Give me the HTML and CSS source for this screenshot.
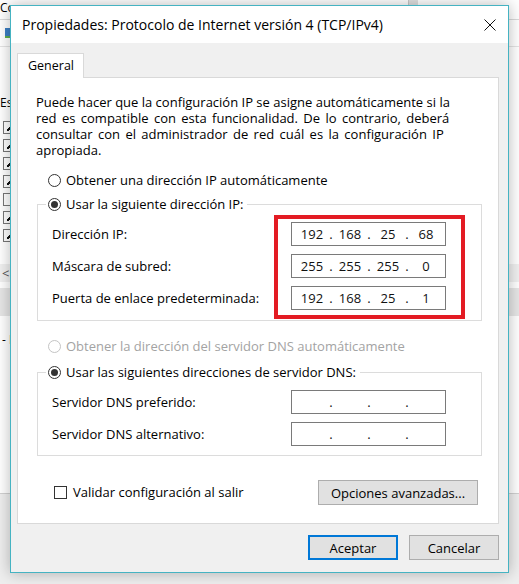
FILE: index.html
```html
<!DOCTYPE html>
<html lang="es">
<head>
<meta charset="utf-8">
<title>Propiedades: Protocolo de Internet versión 4 (TCP/IPv4)</title>
<link rel="stylesheet" href="styles.css">
</head>
<body>
<div class="desktop">
  <div class="bgwin">
    <div class="bg-title">Co</div>
    <div class="bg-toolbar"><span class="bg-icon"></span></div>
    <div class="bg-label">Est</div>
    <ul class="bg-list">
      <li class="on"></li>
      <li class="on"></li>
      <li class="on"></li>
      <li class="on"></li>
      <li></li>
      <li class="on"></li>
      <li class="on"></li>
    </ul>
    <div class="bg-scroll">&lt;</div>
    <div class="bg-band"></div>
    <div class="bg-desc">- D</div>
  </div>
  <div class="bg-edge"></div>

  <section class="dialog">
    <header class="titlebar">
      <span class="title">Propiedades: Protocolo de Internet versión 4 (TCP/IPv4)</span>
      <span class="close">
        <svg width="12" height="12" viewBox="0 0 12 12"><path d="M0.5 0.5 L11.5 11.5 M11.5 0.5 L0.5 11.5" stroke="#111" stroke-width="1" fill="none"/></svg>
      </span>
    </header>
    <div class="dlg-body">
      <div class="tabs"><div class="tab">General</div></div>
      <div class="panel">
        <p class="intro"><span class="line">Puede hacer que la configuración IP se asigne automáticamente si la</span><span class="line wide">red es compatible con esta funcionalidad. De lo contrario, deberá</span><span class="line wide">consultar con el administrador de red cuál es la configuración IP</span><span class="line">apropiada.</span></p>

        <div class="radio-row"><span class="radio"></span><span>Obtener una dirección IP automáticamente</span></div>

        <div class="group group-ip">
          <div class="legend"><span class="radio checked"></span><span>Usar la siguiente dirección IP:</span></div>
          <div class="fields">
            <div class="field"><span class="flabel">Dirección IP:</span>
              <div class="ip"><span class="oct">192</span><span class="dot">.</span><span class="oct">168</span><span class="dot">.</span><span class="oct">25</span><span class="dot">.</span><span class="oct">68</span></div>
            </div>
            <div class="field"><span class="flabel">Máscara de subred:</span>
              <div class="ip"><span class="oct">255</span><span class="dot">.</span><span class="oct">255</span><span class="dot">.</span><span class="oct">255</span><span class="dot">.</span><span class="oct">0</span></div>
            </div>
            <div class="field"><span class="flabel">Puerta de enlace predeterminada:</span>
              <div class="ip"><span class="oct">192</span><span class="dot">.</span><span class="oct">168</span><span class="dot">.</span><span class="oct">25</span><span class="dot">.</span><span class="oct">1</span></div>
            </div>
          </div>
          <div class="highlight"></div>
        </div>

        <div class="radio-row disabled"><span class="radio"></span><span>Obtener la dirección del servidor DNS automáticamente</span></div>

        <div class="group group-dns">
          <div class="legend"><span class="radio checked"></span><span>Usar las siguientes direcciones de servidor DNS:</span></div>
          <div class="fields">
            <div class="field"><span class="flabel">Servidor DNS preferido:</span>
              <div class="ip"><span class="oct"></span><span class="dot">.</span><span class="oct"></span><span class="dot">.</span><span class="oct"></span><span class="dot">.</span><span class="oct"></span></div>
            </div>
            <div class="field"><span class="flabel">Servidor DNS alternativo:</span>
              <div class="ip"><span class="oct"></span><span class="dot">.</span><span class="oct"></span><span class="dot">.</span><span class="oct"></span><span class="dot">.</span><span class="oct"></span></div>
            </div>
          </div>
        </div>

        <div class="bottom-row">
          <div class="check-row"><span class="checkbox"></span><span>Validar configuración al salir</span></div>
          <div class="btn btn-adv">Opciones avanzadas...</div>
        </div>
      </div>
      <div class="actions">
        <div class="btn btn-default">Aceptar</div>
        <div class="btn">Cancelar</div>
      </div>
    </div>
  </section>
</div>
</body>
</html>
```

FILE: styles.css
```css
* { box-sizing: border-box; }
html, body { margin: 0; padding: 0; }
body {
  width: 519px;
  height: 584px;
  overflow: hidden;
  background: #efefef;
  font-family: "Open Sans", "Noto Sans", sans-serif;
  font-size: 13px;
  color: #000;
}
.desktop {
  position: relative;
  width: 519px;
  height: 584px;
  background: #eeeeee;
}

/* background window peeking out on the left */
.bgwin {
  position: absolute;
  left: 0;
  top: 0;
  width: 519px;
  height: 494px;
  background: #fff;
  border-bottom: 1px solid #d0d0d0;
  display: flex;
  flex-direction: column;
}
.bg-title {
  height: 20px;
  padding-top: 1px;
  font-size: 12px;
  line-height: 14px;
  border-bottom: 1px solid #dadada;
}
.bg-toolbar {
  height: 27px;
  padding-top: 8px;
  padding-left: 5px;
  border-bottom: 1px solid #e4e4e4;
}
.bg-icon {
  display: block;
  width: 8px;
  height: 10px;
  background: #3c7fc4;
  border-bottom: 2px solid #5fae4c;
}
.bg-label {
  margin-top: 48px;
  font-size: 12px;
  line-height: 16px;
}
.bg-list {
  list-style: none;
  margin: 10px 0 0 3px;
  padding: 0;
  display: flex;
  flex-direction: column;
  gap: 5px;
}
.bg-list li {
  width: 13px;
  height: 13px;
  border: 1px solid #777;
  background: #fff;
}
.bg-list li.on {
  background: linear-gradient(135deg, transparent 40%, #111 40%, #111 60%, transparent 60%) no-repeat 3px 3px / 6px 6px, #fff;
}
.bg-scroll {
  margin-top: 22px;
  height: 18px;
  padding-left: 2px;
  font-size: 13px;
  line-height: 18px;
  color: #555;
  background: #f0f0f0;
}
.bg-band {
  margin-top: 6px;
  height: 28px;
  background: #e6e6e6;
}
.bg-desc {
  margin-top: 16px;
  padding-left: 2px;
  font-size: 12px;
  line-height: 16px;
}
.bg-edge {
  position: absolute;
  left: 408px;
  top: 0;
  width: 10px;
  height: 6px;
  background: #e0e0e0;
  border-left: 1px solid #c8c8c8;
}

/* dialog */
.dialog {
  position: absolute;
  left: 10px;
  top: 5px;
  width: 499px;
  height: 568px;
  border: 1px solid #45b3c2;
  background: #f0f0f0;
  box-shadow: 0 0 14px rgba(0, 0, 0, 0.28);
  display: flex;
  flex-direction: column;
}
.titlebar {
  height: 37px;
  flex: none;
  background: #fff;
  display: flex;
  align-items: center;
  padding-left: 11px;
}
.title {
  flex: 1;
  font-size: 14px;
  color: #000;
  padding-bottom: 1px;
}
.close {
  width: 36px;
  height: 37px;
  display: flex;
  align-items: center;
  justify-content: center;
}
.dlg-body {
  flex: 1;
  padding: 10px 9px 10px 6px;
  display: flex;
  flex-direction: column;
}
.tabs {
  display: flex;
  position: relative;
  z-index: 1;
}
.tab {
  width: 67px;
  height: 25px;
  background: #fff;
  border: 1px solid #d9d9d9;
  border-bottom: none;
  padding-left: 10px;
  line-height: 23px;
  font-size: 12.5px;
}
.panel {
  margin-top: -1px;
  background: #fff;
  border: 1px solid #d9d9d9;
  padding: 16px 16px 18px 18px;
  display: flex;
  flex-direction: column;
}
.intro {
  margin: 0;
  line-height: 16px;
}
.intro .line { display: block; white-space: nowrap; }
.intro .wide { word-spacing: 2px; }
.radio-row {
  display: flex;
  align-items: center;
  gap: 5px;
  height: 20px;
  margin-top: 12px;
  margin-left: 12px;
}
.radio-row.disabled { color: #a3a3a3; margin-top: 15px; }
.radio {
  width: 13px;
  height: 13px;
  border-radius: 50%;
  border: 1px solid #333;
  background: #fff;
  flex: none;
  position: relative;
}
.radio.checked::after {
  content: "";
  position: absolute;
  left: 2px;
  top: 2px;
  width: 7px;
  height: 7px;
  border-radius: 50%;
  background: #333;
}
.radio-row.disabled .radio { border-color: #c4c4c4; }

.group {
  position: relative;
  margin-left: 1px;
  margin-top: 14px;
  border: 1px solid #dcdcdc;
  display: flex;
  flex-direction: column;
}
.group-dns { margin-top: 16px; }
.legend {
  align-self: flex-start;
  display: flex;
  align-items: center;
  gap: 5px;
  height: 20px;
  margin-top: -11px;
  margin-left: 8px;
  padding: 0 4px 0 2px;
  background: #fff;
}
.fields {
  display: flex;
  flex-direction: column;
  gap: 8px;
  padding: 8px 35px 10px 14px;
}
.group-dns .fields { padding-bottom: 9px; }
.field {
  display: flex;
  align-items: center;
  justify-content: space-between;
  height: 24px;
}
.ip {
  width: 155px;
  height: 24px;
  border: 1px solid #7a7a7a;
  background: #fff;
  display: flex;
  align-items: center;
  padding-left: 5px;
  color: #111;
  font-size: 13px;
}
.oct {
  width: 30px;
  text-align: center;
}
.dot {
  width: 8px;
  text-align: center;
}
.highlight {
  position: absolute;
  left: 236px;
  top: 10px;
  width: 191px;
  height: 104px;
  border: 4px solid #e31b23;
  pointer-events: none;
}

.bottom-row {
  margin-top: 24px;
  display: flex;
  justify-content: space-between;
  align-items: flex-start;
  padding-right: 4px;
}
.check-row {
  display: flex;
  align-items: center;
  gap: 6px;
  margin-left: 18px;
  margin-top: 2px;
  height: 20px;
}
.checkbox {
  width: 13px;
  height: 13px;
  border: 1px solid #333;
  background: #fff;
}
.btn {
  height: 25px;
  width: 90px;
  background: #e1e1e1;
  border: 1px solid #adadad;
  display: flex;
  align-items: center;
  justify-content: center;
}
.btn-adv { width: 160px; }
.btn-default {
  border: 2px solid #0078d7;
}
.actions {
  margin-top: 11px;
  display: flex;
  justify-content: flex-end;
  gap: 11px;
}
```
